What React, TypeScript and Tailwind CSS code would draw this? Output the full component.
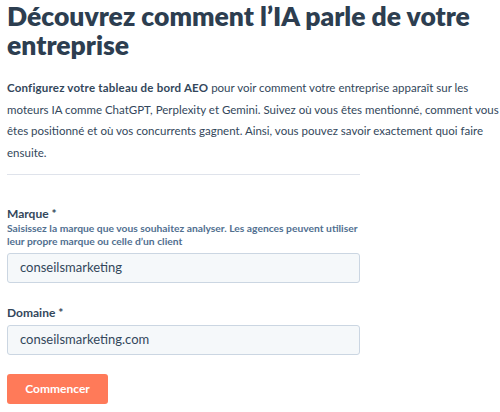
export default function App() {
  return (
    <div className="w-[500px] h-[412px] overflow-hidden bg-white px-[7px] font-['Lato','Noto_Sans',sans-serif] text-[#33475b]">
      <h1 className="text-[26.5px] font-extrabold leading-[29px] pt-[2px] text-[#2d3e50]">
        Découvrez comment l’IA parle de votre entreprise
      </h1>

      <p className="mt-[17px] w-[492px] text-[11.5px] leading-[21.5px] text-[#33475b]">
        <span className="font-bold tracking-[0.2px]">Configurez votre tableau de bord AEO</span> pour voir comment votre
        entreprise apparaît sur les moteurs IA comme ChatGPT, Perplexity et Gemini. Suivez où vous êtes
        mentionné, comment vous êtes positionné et où vos concurrents gagnent. Ainsi, vous pouvez savoir
        exactement quoi faire ensuite.
      </p>

      <div className="mt-[11px] w-[353px] border-t border-[#dfe3eb]" />

      <div className="w-[353px] mt-[31px]">
        <label className="block text-[12px] font-bold leading-[15px]">Marque *</label>
        <p className="mt-[1px] w-[362px] text-[10.3px] font-bold leading-[13px] text-[#516f90]">
          Saisissez la marque que vous souhaitez analyser. Les agences peuvent utiliser leur propre marque ou
          celle d’un client
        </p>
        <div className="mt-[5px] h-[30px] rounded-[3px] border border-[#cbd6e2] bg-[#f5f8fa] px-[12px] flex items-center text-[13px] text-[#33475b]">
          conseilsmarketing
        </div>

        <label className="mt-[22px] block text-[12px] font-bold leading-[15px]">Domaine *</label>
        <div className="mt-[5px] h-[30px] rounded-[3px] border border-[#cbd6e2] bg-[#f5f8fa] px-[12px] flex items-center text-[13px] text-[#33475b]">
          conseilsmarketing.com
        </div>

        <button className="mt-[19px] h-[30px] w-[101px] rounded-[3px] bg-[#ff7a59] text-white text-[12px] font-bold">
          Commencer
        </button>
      </div>
    </div>
  );
}
